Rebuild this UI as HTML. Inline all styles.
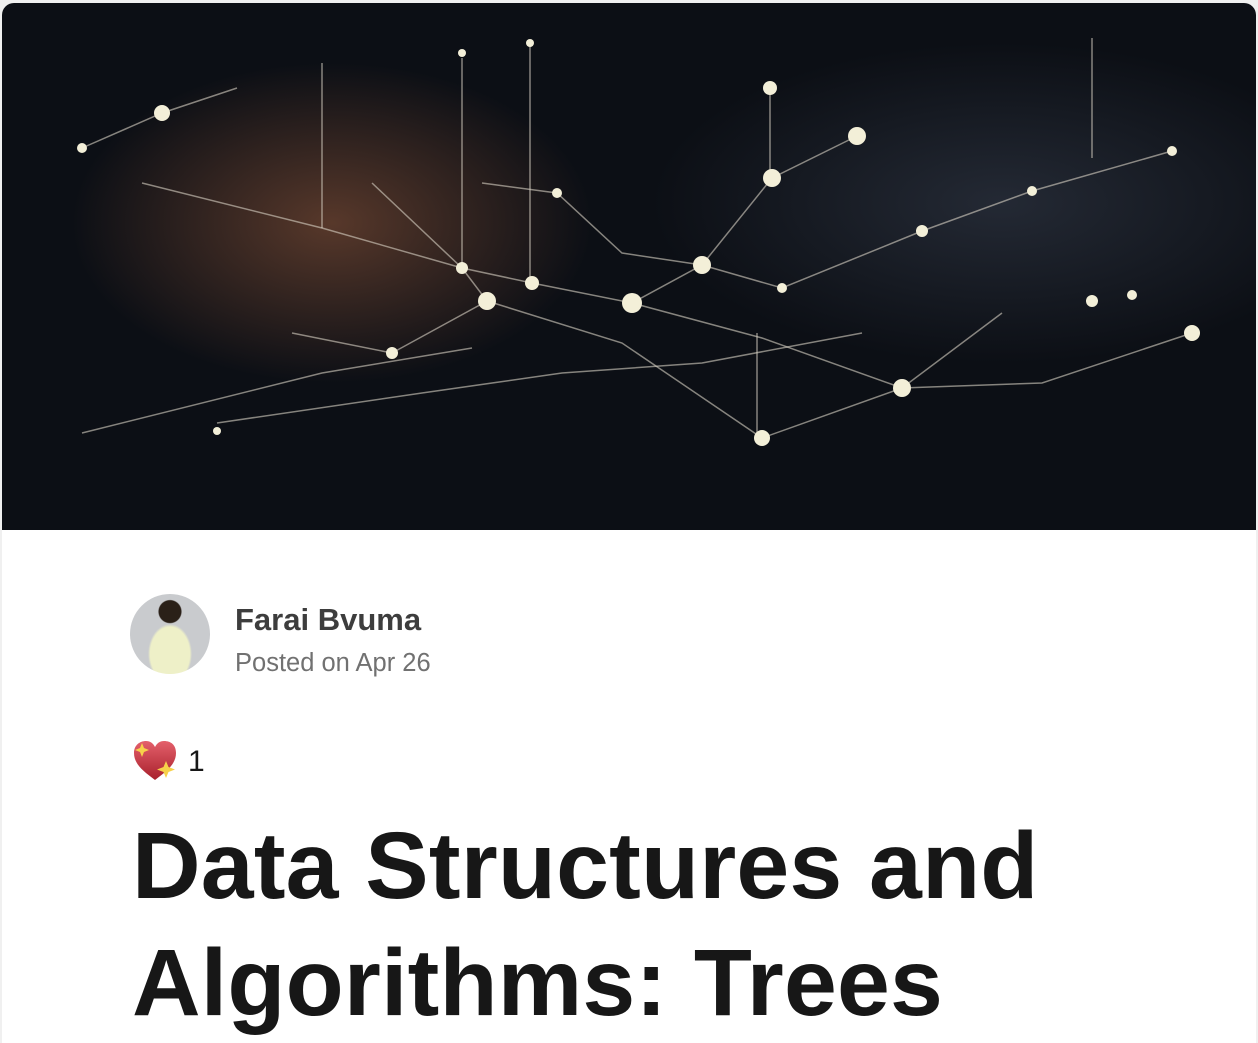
<!DOCTYPE html>
<html><head><meta charset="utf-8"><style>
html,body{margin:0;padding:0;background:#f0f0f0;width:1258px;height:1036px;overflow:hidden}
.card{position:absolute;left:2px;top:3px;width:1254px;height:1040px;background:#fff;border-radius:12px 12px 0 0;overflow:hidden}
.hero{position:absolute;left:0;top:0;width:1254px;height:527px;background:radial-gradient(ellipse 260px 160px at 330px 220px,rgba(150,90,60,.55),transparent),radial-gradient(ellipse 350px 160px at 1000px 200px,rgba(80,90,110,.35),transparent),#0c0f15}
.av{position:absolute;left:128px;top:591px;width:80px;height:80px;border-radius:50%;background:radial-gradient(circle at 50% 22%,#2a2018 11px,transparent 12px),radial-gradient(ellipse 22px 30px at 50% 75%,#eef0c8 90%,transparent),#c9cbce;overflow:hidden}
.name{position:absolute;left:233px;top:599px;font:bold 31px "Liberation Sans",sans-serif;color:#3d3d3d}
.date{position:absolute;left:233px;top:646px;font:25.5px "Liberation Sans",sans-serif;color:#717171}
.heart{position:absolute;left:131px;top:737px}
.one{position:absolute;left:186px;top:742px;font:30px "Liberation Sans",sans-serif;color:#171717}
h1{position:absolute;left:130px;top:805px;margin:0;width:1100px;font:bold 95px/117px "Liberation Sans",sans-serif;letter-spacing:0.2px;color:#171717}
</style></head><body>
<div class="card">
<div class="hero">
<svg width="1254" height="527" viewBox="0 0 1254 527">
<g stroke="#d9d2c4" stroke-opacity=".6" stroke-width="1.5" fill="none">
<polyline points="80,145 160,110 235,85"/>
<polyline points="140,180 320,225 460,265 530,280 630,300 700,262 770,175 855,133"/>
<polyline points="370,180 460,265 485,298 390,350 290,330"/>
<polyline points="480,180 555,190 620,250 700,262 780,285 920,228 1030,188 1170,148"/>
<polyline points="630,300 760,335 900,385 1040,380 1190,330"/>
<polyline points="485,298 620,340 760,435 900,385 1000,310"/>
<polyline points="460,55 460,265"/><polyline points="528,40 528,280"/><polyline points="768,85 768,175"/>
<polyline points="755,330 755,435"/><polyline points="320,60 320,225"/><polyline points="1090,35 1090,155"/>
<polyline points="215,420 420,390 560,370 700,360 860,330"/>
<polyline points="80,430 320,370 470,345"/>
</g>
<g fill="#f3efd8">
<circle cx="160" cy="110" r="8"/><circle cx="855" cy="133" r="9"/><circle cx="770" cy="175" r="9"/>
<circle cx="485" cy="298" r="9"/><circle cx="630" cy="300" r="10"/><circle cx="700" cy="262" r="9"/>
<circle cx="530" cy="280" r="7"/><circle cx="900" cy="385" r="9"/><circle cx="760" cy="435" r="8"/>
<circle cx="1190" cy="330" r="8"/><circle cx="920" cy="228" r="6"/><circle cx="1030" cy="188" r="5"/>
<circle cx="1170" cy="148" r="5"/><circle cx="390" cy="350" r="6"/><circle cx="460" cy="265" r="6"/>
<circle cx="768" cy="85" r="7"/><circle cx="528" cy="40" r="4"/><circle cx="460" cy="50" r="4"/>
<circle cx="1130" cy="292" r="5"/><circle cx="1090" cy="298" r="6"/><circle cx="780" cy="285" r="5"/>
<circle cx="80" cy="145" r="5"/><circle cx="215" cy="428" r="4"/><circle cx="555" cy="190" r="5"/>
</g>
</svg>
</div>
<div class="av"></div>
<div class="name">Farai Bvuma</div>
<div class="date">Posted on Apr 26</div>
<svg class="heart" width="46" height="42" viewBox="0 0 46 42">
<defs><linearGradient id="g" x1="0" y1="0" x2="0" y2="1"><stop offset="0" stop-color="#e4606b"/><stop offset="1" stop-color="#a8202c"/></linearGradient></defs>
<path d="M22 40 C10 31 1 24 1 13 C1 5 7 1 13 1 C17 1 20 3 22 7 C24 3 27 1 31 1 C38 1 43 5 43 13 C43 24 34 31 22 40Z" fill="url(#g)"/>
<path d="M9 3 L11 8 L16 10 L11 12 L9 17 L7 12 L2 10 L7 8Z" fill="#f7d14a"/>
<path d="M33 21 L35.5 27 L42 29.5 L35.5 32 L33 38 L30.5 32 L24 29.5 L30.5 27Z" fill="#f7d14a"/>
</svg>
<div class="one">1</div>
<h1>Data Structures and Algorithms: Trees</h1>
</div>
</body></html>
